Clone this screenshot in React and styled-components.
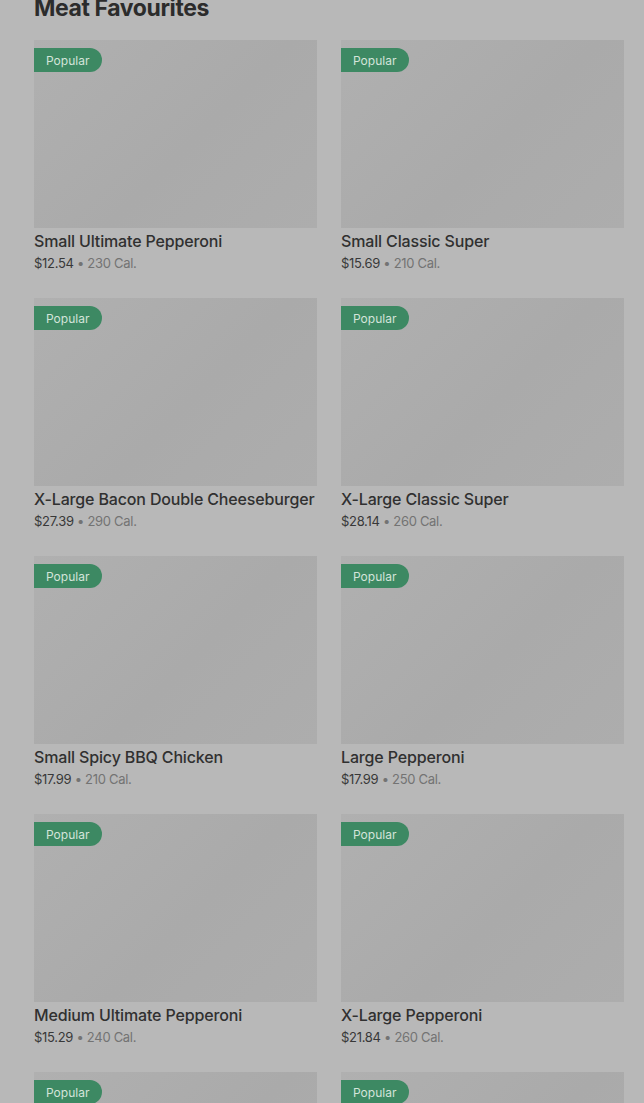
import React from 'react'
import styled, { createGlobalStyle } from 'styled-components'

const Global = createGlobalStyle`
  html, body {
    margin: 0;
    background: #b8b8b8;
    font-family: Inter, "Noto Sans", sans-serif;
    overflow: hidden;
  }
`;

const Page = styled.main`
  padding: 0 20px 0 34px;
  margin-top: -12px;
`;

const Heading = styled.h2`
  margin: 0 0 12px;
  font-size: 23px;
  line-height: 40px;
  font-weight: 700;
  letter-spacing: -0.4px;
  color: #2c2c2c;
`;

const Grid = styled.div`
  display: grid;
  grid-template-columns: 283px 283px;
  column-gap: 24px;
  row-gap: 24px;
`;

const Card = styled.div`
  display: flex;
  flex-direction: column;
`;

const Thumb = styled.div`
  position: relative;
  height: 188px;
  background: linear-gradient(135deg, #b0b0b0 0%, #aaaaaa 55%, #adadad 100%);
`;

const Badge = styled.span`
  position: absolute;
  top: 8px;
  left: 0;
  height: 24px;
  padding: 0 13px 0 12px;
  display: flex;
  align-items: center;
  background: #3d8963;
  color: #d4e4da;
  font-size: 12px;
  border-radius: 0 12px 12px 0;
`;

const Title = styled.div`
  margin-top: 2px;
  font-size: 16px;
  line-height: 22px;
  font-weight: 500;
  letter-spacing: -0.15px;
  color: #303030;
  white-space: nowrap;
`;

const Meta = styled.div`
  font-size: 13px;
  line-height: 22px;
  color: #383838;
  letter-spacing: -0.3px;
`;

const Cal = styled.span`
  color: #737373;
`;

const items = [
  ['Small Ultimate Pepperoni', '$12.54', '230 Cal.'],
  ['Small Classic Super', '$15.69', '210 Cal.'],
  ['X-Large Bacon Double Cheeseburger', '$27.39', '290 Cal.'],
  ['X-Large Classic Super', '$28.14', '260 Cal.'],
  ['Small Spicy BBQ Chicken', '$17.99', '210 Cal.'],
  ['Large Pepperoni', '$17.99', '250 Cal.'],
  ['Medium Ultimate Pepperoni', '$15.29', '240 Cal.'],
  ['X-Large Pepperoni', '$21.84', '260 Cal.'],
  ['Medium Classic Super', '$19.49', '240 Cal.'],
  ['Large Ultimate Pepperoni', '$23.19', '250 Cal.'],
];

export default function App() {
  return (
    <Page>
      <Global />
      <Heading>Meat Favourites</Heading>
      <Grid>
        {items.map(([name, price, cal], i) => (
          <Card key={i}>
            <Thumb>
              <Badge>Popular</Badge>
            </Thumb>
            <Title>{name}</Title>
            <Meta>
              {price} <Cal>• {cal}</Cal>
            </Meta>
          </Card>
        ))}
      </Grid>
    </Page>
  )
}
